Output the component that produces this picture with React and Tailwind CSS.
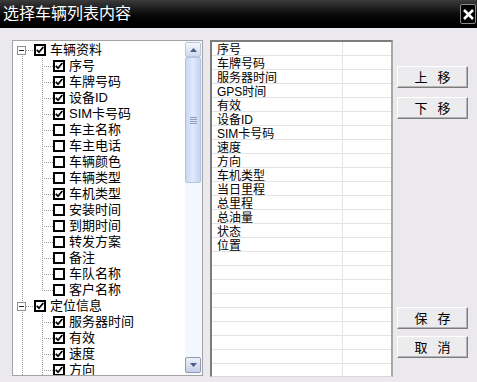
import React from 'react';

const tree = [
  { label: '车辆资料', parent: true, on: true, first: true },
  { label: '序号', on: true },
  { label: '车牌号码', on: true },
  { label: '设备ID', on: true },
  { label: 'SIM卡号码', on: true },
  { label: '车主名称' },
  { label: '车主电话' },
  { label: '车辆颜色' },
  { label: '车辆类型' },
  { label: '车机类型', on: true },
  { label: '安装时间' },
  { label: '到期时间' },
  { label: '转发方案' },
  { label: '备注' },
  { label: '车队名称' },
  { label: '客户名称', last: true },
  { label: '定位信息', parent: true, on: true },
  { label: '服务器时间', on: true },
  { label: '有效', on: true },
  { label: '速度', on: true },
  { label: '方向', on: true },
];

const listItems = [
  '序号', '车牌号码', '服务器时间', 'GPS时间', '有效', '设备ID', 'SIM卡号码', '速度',
  '方向', '车机类型', '当日里程', '总里程', '总油量', '状态', '位置',
];

const dot = { stroke: '#9c9c9c', strokeWidth: 1, strokeDasharray: '1 1' };

const Connector = ({ row }) =>
  row.parent ? (
    <svg width="21" height="16" className="shrink-0">
      <line x1="9.5" y1={row.first ? 8 : 0} x2="9.5" y2="16" style={dot} />
      <line x1="13" y1="8.5" x2="21" y2="8.5" style={dot} />
      <rect x="4.5" y="4.5" width="8" height="8" fill="#fff" stroke="#8f8f8f" />
      <line x1="6" y1="8.5" x2="11" y2="8.5" stroke="#222" />
    </svg>
  ) : (
    <svg width="40" height="16" className="shrink-0">
      <line x1="9.5" y1="0" x2="9.5" y2="16" style={dot} />
      <line x1="29.5" y1="0" x2="29.5" y2={row.last ? 9 : 16} style={dot} />
      <line x1="31" y1="8.5" x2="40" y2="8.5" style={dot} />
    </svg>
  );

const Check = ({ on }) => (
  <span className="w-[12px] h-[12px] shrink-0 border-2 border-black bg-white flex items-center justify-center">
    {on && (
      <svg width="8" height="8" viewBox="0 0 8 8">
        <path d="M0.8 3.8 L3 6.2 L7.3 1" fill="none" stroke="#000" strokeWidth="1.8" />
      </svg>
    )}
  </span>
);

const Btn = ({ a, b, className = '' }) => (
  <div
    className={`h-[22px] flex items-center justify-center gap-[10px] text-[13px] leading-none text-black bg-[#ecebee] border border-t-white border-l-white border-r-[#7c7c7c] border-b-[#7c7c7c] shadow-[inset_-1px_-1px_0_#b4b4b4] ${className}`}
  >
    <span>{a}</span>
    <span>{b}</span>
  </div>
);

export default function App() {
  return (
    <div className="w-[477px] h-[382px] flex flex-col overflow-hidden bg-[#ebe9ee] font-['Liberation_Sans','Noto_Sans_CJK_SC',sans-serif]">
      <div className="h-[28px] shrink-0 flex items-center justify-between pl-[3px] pr-[1px] bg-linear-to-b from-[#3c3c3c] via-[#0c0c0c] to-black">
        <span className="text-white text-[16px] leading-none">选择车辆列表内容</span>
        <div className="w-[16px] h-[20px] border border-[#8a8a8a] rounded-[2px] bg-black flex items-center justify-center">
          <svg width="11" height="11" viewBox="0 0 11 11">
            <path d="M1 1 L10 10 M10 1 L1 10" stroke="#fff" strokeWidth="2.6" />
          </svg>
        </div>
      </div>

      <div className="flex pl-[12px] pt-[12px]">
        <div className="w-[191px] h-[336px] border border-[#a3a3a3] bg-white flex">
          <div className="flex-1 overflow-hidden pt-[1px] text-[13px] leading-[16px] text-black">
            {tree.map((row, i) => (
              <div key={i} className="h-[16px] flex items-center whitespace-nowrap">
                <Connector row={row} />
                <Check on={row.on} />
                <span className="ml-[4px]">{row.label}</span>
              </div>
            ))}
          </div>
          <div className="w-[17px] pr-[1px] pt-[1px] pb-[2px] flex flex-col bg-[#f4f7fd]">
            <div className="h-[15px] shrink-0 rounded-[2px] border border-[#b9c6de] bg-linear-to-b from-[#f6f8fc] to-[#cdd9ef] flex items-center justify-center">
              <svg width="7" height="4"><path d="M3.5 0 L7 4 L0 4 Z" fill="#4b5d80" /></svg>
            </div>
            <div className="h-[126px] shrink-0 rounded-[2px] border border-[#b2c3e2] bg-linear-to-r from-[#c8d7f4] via-[#e2eafb] to-[#c3d3f1] flex flex-col items-center justify-center gap-[1px]">
              <span className="w-[7px] h-px bg-[#8c9dbd]" />
              <span className="w-[7px] h-px bg-[#8c9dbd]" />
              <span className="w-[7px] h-px bg-[#8c9dbd]" />
              <span className="w-[7px] h-px bg-[#8c9dbd]" />
            </div>
            <div className="flex-1" />
            <div className="h-[16px] shrink-0 rounded-[2px] border border-[#8e9bb3] bg-linear-to-b from-[#eef2f9] to-[#c4d0e6] flex items-center justify-center">
              <svg width="7" height="4"><path d="M0 0 L7 0 L3.5 4 Z" fill="#4b5d80" /></svg>
            </div>
          </div>
        </div>

        <div className="ml-[7px] w-[183px] h-[337px] bg-white border-t-2 border-l-2 border-t-[#7d7d7d] border-l-[#7d7d7d] border-r-2 border-b border-r-[#a8a8a8] border-b-[#d8d8d8] overflow-hidden">
          {Array.from({ length: 24 }).map((_, i) => (
            <div key={i} className="h-[14px] flex border-b border-[#e4e4e4] text-[12px] text-black">
              <div className="w-[131px] h-[13px] pl-[5px] pt-[2px] leading-[12px] border-r border-[#e4e4e4] whitespace-nowrap">{listItems[i] || ''}</div>
              <div className="flex-1" />
            </div>
          ))}
        </div>

        <div className="ml-[4px] w-[71px] h-[337px] flex flex-col pt-[26px] pb-[19px]">
          <Btn a="上" b="移" />
          <Btn a="下" b="移" className="mt-[9px]" />
          <Btn a="保" b="存" className="mt-auto" />
          <Btn a="取" b="消" className="mt-[7px]" />
        </div>
      </div>
    </div>
  );
}
